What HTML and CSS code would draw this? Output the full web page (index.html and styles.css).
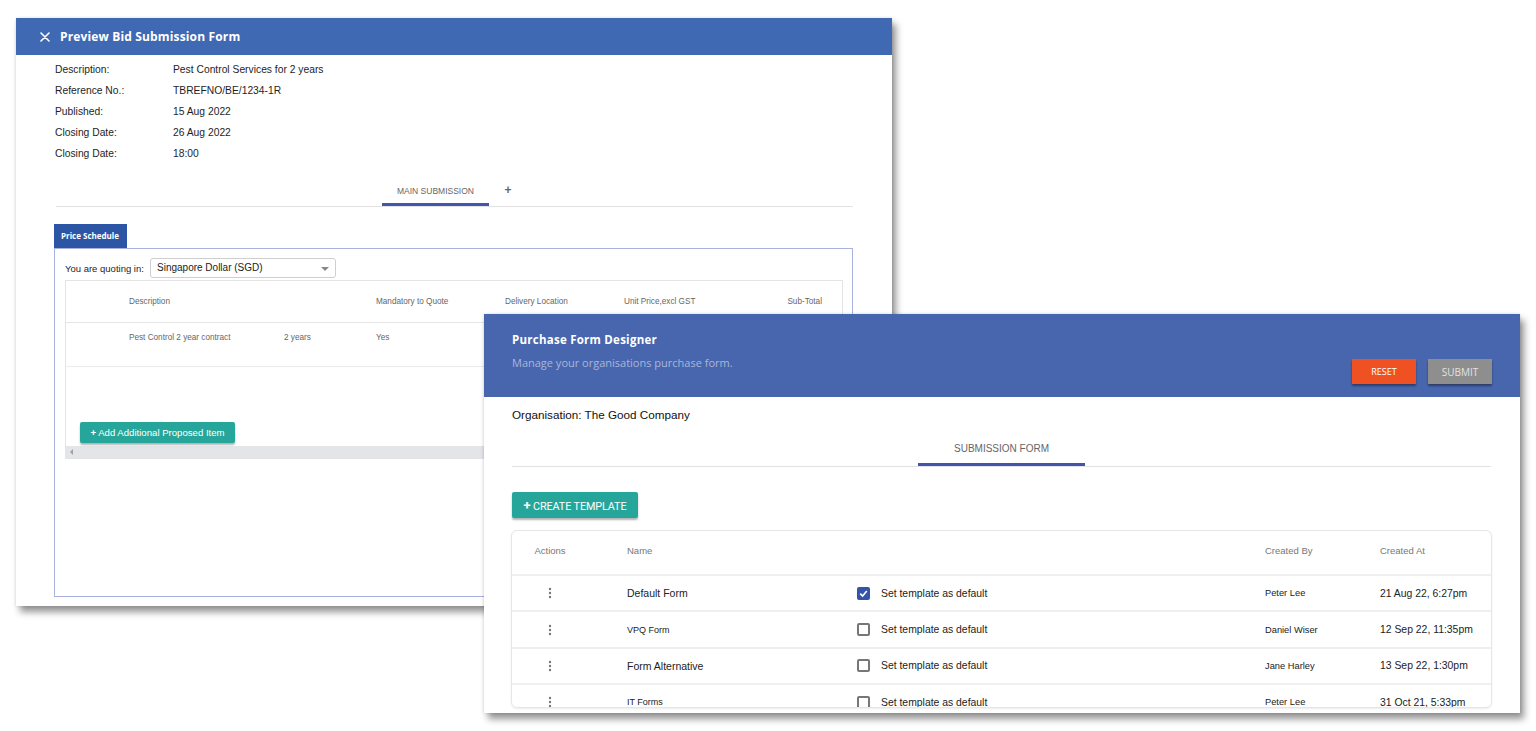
FILE: index.html
```html
<!DOCTYPE html>
<html lang="en">
<head>
<meta charset="utf-8">
<title>Bid Submission &amp; Purchase Form Designer</title>
<link rel="stylesheet" href="styles.css">
</head>
<body>
<div class="canvas">
  <section class="win win-bid">
    <header class="bid-head">
      <svg class="close" width="10" height="10" viewBox="0 0 10 10"><path d="M1 1L9 9M9 1L1 9" stroke="#fff" stroke-width="1.6" stroke-linecap="round"/></svg>
      <h1 class="bid-title">Preview Bid Submission Form</h1>
    </header>
    <div class="bid-body">
      <dl class="meta">
        <div class="meta-row"><dt>Description:</dt><dd>Pest Control Services for 2 years</dd></div>
        <div class="meta-row"><dt>Reference No.:</dt><dd>TBREFNO/BE/1234-1R</dd></div>
        <div class="meta-row"><dt>Published:</dt><dd>15 Aug 2022</dd></div>
        <div class="meta-row"><dt>Closing Date:</dt><dd>26 Aug 2022</dd></div>
        <div class="meta-row"><dt>Closing Date:</dt><dd>18:00</dd></div>
      </dl>
      <nav class="tabs-sm">
        <span class="tab-sm tab-sm--active">MAIN SUBMISSION</span>
        <span class="tab-add">+</span>
      </nav>
      <div class="ps-tab">Price Schedule</div>
      <div class="ps-panel">
        <div class="quote">
          <span class="quote-label">You are quoting in:</span>
          <div class="select">Singapore Dollar (SGD)<span class="caret"></span></div>
        </div>
        <div class="ptable">
          <div class="prow prow--head">
            <span></span><span>Description</span><span></span><span>Mandatory to Quote</span><span>Delivery Location</span><span>Unit Price,excl GST</span><span>Sub-Total</span>
          </div>
          <div class="prow prow--data">
            <span></span><span>Pest Control 2 year contract</span><span>2 years</span><span>Yes</span><span></span><span></span><span></span>
          </div>
          <div class="ptable-fill">
            <button class="btn-add"><span class="plus">+</span> Add Additional Proposed Item</button>
          </div>
          <div class="hscroll"><span class="hscroll-arrow"></span></div>
        </div>
      </div>
    </div>
  </section>

  <section class="win win-pfd">
    <header class="pfd-head">
      <div class="pfd-head-text">
        <h2 class="pfd-title">Purchase Form Designer</h2>
        <p class="pfd-sub">Manage your organisations purchase form.</p>
      </div>
      <div class="pfd-actions">
        <button class="btn-head btn-reset">RESET</button>
        <button class="btn-head btn-submit">SUBMIT</button>
      </div>
    </header>
    <div class="pfd-body">
      <div class="org">Organisation: The Good Company</div>
      <nav class="tabs-lg">
        <span class="tab-lg tab-lg--active">SUBMISSION FORM</span>
      </nav>
      <div class="create-row">
        <button class="btn-create"><span class="plus">+</span> CREATE TEMPLATE</button>
      </div>
      <div class="card">
        <div class="trow trow--head">
          <span class="c-act">Actions</span><span>Name</span><span></span><span>Created By</span><span>Created At</span>
        </div>
        <div class="trow">
          <span class="c-act"><svg class="kebab" width="4" height="12" viewBox="0 0 4 12"><circle cx="2" cy="2" r="1.2"/><circle cx="2" cy="6" r="1.2"/><circle cx="2" cy="10" r="1.2"/></svg></span>
          <span class="c-name">Default Form</span>
          <span class="c-chk"><span class="chk chk--on"><svg width="9" height="9" viewBox="0 0 9 9"><path d="M1.2 4.6L3.6 7L7.8 2" fill="none" stroke="#fff" stroke-width="1.6"/></svg></span>Set template as default</span>
          <span class="c-by">Peter Lee</span>
          <span class="c-at">21 Aug 22, 6:27pm</span>
        </div>
        <div class="trow">
          <span class="c-act"><svg class="kebab" width="4" height="12" viewBox="0 0 4 12"><circle cx="2" cy="2" r="1.2"/><circle cx="2" cy="6" r="1.2"/><circle cx="2" cy="10" r="1.2"/></svg></span>
          <span class="c-name c-name--sm">VPQ Form</span>
          <span class="c-chk"><span class="chk"></span>Set template as default</span>
          <span class="c-by">Daniel Wiser</span>
          <span class="c-at">12 Sep 22, 11:35pm</span>
        </div>
        <div class="trow">
          <span class="c-act"><svg class="kebab" width="4" height="12" viewBox="0 0 4 12"><circle cx="2" cy="2" r="1.2"/><circle cx="2" cy="6" r="1.2"/><circle cx="2" cy="10" r="1.2"/></svg></span>
          <span class="c-name">Form Alternative</span>
          <span class="c-chk"><span class="chk"></span>Set template as default</span>
          <span class="c-by">Jane Harley</span>
          <span class="c-at">13 Sep 22, 1:30pm</span>
        </div>
        <div class="trow">
          <span class="c-act"><svg class="kebab" width="4" height="12" viewBox="0 0 4 12"><circle cx="2" cy="2" r="1.2"/><circle cx="2" cy="6" r="1.2"/><circle cx="2" cy="10" r="1.2"/></svg></span>
          <span class="c-name c-name--sm">IT Forms</span>
          <span class="c-chk"><span class="chk"></span>Set template as default</span>
          <span class="c-by">Peter Lee</span>
          <span class="c-at">31 Oct 21, 5:33pm</span>
        </div>
      </div>
    </div>
  </section>
</div>
</body>
</html>
```

FILE: styles.css
```css
* { box-sizing: border-box; }

body {
  margin: 0;
  background: #ffffff;
  font-family: "Liberation Sans", Arial, sans-serif;
  color: #222;
}

.canvas {
  position: relative;
  width: 1536px;
  height: 731px;
  overflow: hidden;
  background: #fff;
}

.win {
  position: absolute;
  background: #fff;
  display: flex;
  flex-direction: column;
  overflow: hidden;
}

/* ---------- Window 1: Preview Bid Submission Form ---------- */
.win-bid {
  left: 16px;
  top: 18px;
  width: 876px;
  height: 588px;
  box-shadow: 0 0 3px rgba(0,0,0,0.12), 4px 6px 7px rgba(0,0,0,0.42);
}

.bid-head {
  height: 37px;
  flex: none;
  background: #4069b3;
  display: flex;
  align-items: center;
  padding-left: 24px;
}

.close { margin-right: 10px; }

.bid-title {
  margin: 0;
  font-family: "Open Sans", sans-serif;
  font-weight: 700;
  font-size: 12px;
  color: #fff;
  letter-spacing: 0.15px;
}

.bid-body {
  padding: 0 39px 0 38px;
}

.meta {
  margin: 0;
  padding: 4px 0 0 1px;
}

.meta-row {
  display: flex;
  line-height: 21px;
  font-size: 10.3px;
  color: #1e1e1e;
}

.meta-row dt { width: 118px; }
.meta-row dd { margin: 0; }

.tabs-sm {
  margin: 12px 0 0 2px;
  display: flex;
  justify-content: center;
  border-bottom: 1px solid #e2e2e2;
}

.tab-sm {
  width: 107px;
  height: 30px;
  padding-top: 9px;
  line-height: 12px;
  text-align: center;
  font-size: 8.5px;
  color: #666;
}

.tab-sm--active { border-bottom: 3px solid #4356ae; }

.tab-add {
  width: 38px;
  height: 30px;
  padding-top: 8px;
  line-height: 12px;
  text-align: center;
  font-size: 12px;
  font-weight: 700;
  color: #666;
}

.ps-tab {
  margin-top: 17px;
  width: 73px;
  height: 24px;
  line-height: 24px;
  padding-left: 7px;
  background: #2d55a6;
  color: #fff;
  font-family: "Open Sans", sans-serif;
  font-weight: 700;
  font-size: 8px;
}

.ps-panel {
  height: 349px;
  border: 1px solid #a9b1df;
  padding: 9px 9px 0 10px;
}

.quote {
  display: flex;
  align-items: center;
  height: 20px;
}

.quote-label {
  width: 85px;
  font-size: 9.5px;
  color: #1e1e1e;
}

.select {
  position: relative;
  width: 186px;
  height: 20px;
  border: 1px solid #cfcfcf;
  border-radius: 3px;
  padding-left: 6px;
  line-height: 18px;
  font-size: 10px;
  color: #222;
}

.caret {
  position: absolute;
  right: 6px;
  top: 8px;
  border-left: 4px solid transparent;
  border-right: 4px solid transparent;
  border-top: 4px solid #888;
}

.ptable {
  margin-top: 2px;
  border: 1px solid #e4e4e4;
}

.prow {
  display: grid;
  grid-template-columns: 63px 155px 92px 129px 119px 1fr auto;
  padding-right: 20px;
  font-size: 8.2px;
  color: #666;
}

.prow--head {
  height: 42px;
  align-items: center;
  border-bottom: 1px solid #e6e6e6;
}

.prow--data {
  height: 44px;
  padding-top: 10px;
  line-height: 10px;
  align-items: start;
  border-bottom: 1px solid #ececec;
}

.ptable-fill {
  height: 79px;
  padding: 55px 0 0 14px;
}

.btn-add {
  height: 21px;
  width: 155px;
  padding: 0;
  border: none;
  border-radius: 2px;
  background: #26a69a;
  color: #fff;
  font-family: "Liberation Sans", Arial, sans-serif;
  font-size: 9.6px;
  box-shadow: 0 2px 2px rgba(0,0,0,0.3);
}

.btn-add .plus { font-weight: 700; }

.hscroll {
  height: 12px;
  background: #e3e5e8;
  display: flex;
  align-items: center;
  padding-left: 4px;
}

.hscroll-arrow {
  border-top: 3px solid transparent;
  border-bottom: 3px solid transparent;
  border-right: 3px solid #a0a0a0;
}

/* ---------- Window 2: Purchase Form Designer ---------- */
.win-pfd {
  left: 484px;
  top: 314px;
  width: 1036px;
  height: 399px;
  z-index: 2;
  box-shadow: 0 0 3px rgba(0,0,0,0.15), 4px 6px 7px rgba(0,0,0,0.42);
}

.pfd-head {
  height: 83px;
  flex: none;
  background: #4866ae;
  display: flex;
  justify-content: space-between;
  padding: 0 28px;
}

.pfd-head-text { padding-top: 18px; }

.pfd-title {
  margin: 0;
  line-height: 16px;
  font-family: "Open Sans", sans-serif;
  font-weight: 700;
  font-size: 11.5px;
  color: #fff;
  letter-spacing: 0.25px;
}

.pfd-sub {
  margin: 8px 0 0;
  line-height: 14px;
  font-family: "Open Sans", sans-serif;
  font-size: 11px;
  color: #a9b6d9;
}

.pfd-actions {
  align-self: flex-end;
  padding-bottom: 13px;
  display: flex;
  gap: 12px;
}

.btn-head {
  width: 64px;
  height: 25px;
  border: none;
  font-family: "Open Sans", sans-serif;
  font-size: 9px;
  box-shadow: 0 2px 2px rgba(0,0,0,0.4);
}

.btn-reset { background: #f05122; color: #fff; }
.btn-submit { background: #8e8e8e; color: #e2e2e2; font-size: 10px; }

.pfd-body {
  flex: 1;
  min-height: 0;
  display: flex;
  flex-direction: column;
  padding: 0 28px 5px 27px;
}

.org {
  margin-top: 10px;
  padding-left: 1px;
  line-height: 16px;
  font-size: 11.7px;
  color: #111;
}

.tabs-lg {
  margin: 0 1px;
  display: flex;
  justify-content: center;
  border-bottom: 1px solid #e2e2e2;
}

.tab-lg {
  width: 167px;
  height: 43px;
  padding-top: 18px;
  line-height: 16px;
  text-align: center;
  font-size: 10px;
  color: #666;
}

.tab-lg--active { border-bottom: 3px solid #4355ab; }

.create-row {
  margin-top: 25px;
  padding-left: 1px;
}

.btn-create {
  width: 126px;
  height: 26px;
  border: none;
  border-radius: 2px;
  background: #26a69a;
  color: #fff;
  font-family: Roboto, sans-serif;
  font-size: 10.8px;
  letter-spacing: -0.1px;
  box-shadow: 0 2px 2px rgba(0,0,0,0.3);
}

.btn-create .plus {
  font-weight: 700;
  font-size: 13px;
}

.card {
  margin-top: 12px;
  flex: 1;
  min-height: 0;
  overflow: hidden;
  border: 1px solid #e6e6e6;
  border-radius: 6px;
  box-shadow: 0 1px 2px rgba(0,0,0,0.08);
}

.trow {
  display: grid;
  grid-template-columns: 115px 230px 408px 115px 1fr;
  align-items: center;
  height: 36.4px;
  border-bottom: 2px solid #efefef;
  font-size: 10.5px;
  color: #222;
}

.trow--head {
  height: 45px;
  padding-bottom: 4px;
  font-size: 9.5px;
  color: #777;
}

.c-act {
  width: 76px;
  text-align: center;
  display: flex;
  justify-content: center;
}

.kebab { fill: #777; }

.c-name--sm { font-size: 9px; }

.c-chk {
  display: flex;
  align-items: center;
  gap: 11px;
  font-size: 10.4px;
}

.chk {
  width: 13px;
  height: 13px;
  border: 2px solid #777;
  border-radius: 2px;
  display: flex;
  align-items: center;
  justify-content: center;
}

.chk--on {
  background: #3354a8;
  border-color: #3354a8;
}

.c-by { font-size: 9.3px; }
.c-at { font-size: 10.4px; }
```
